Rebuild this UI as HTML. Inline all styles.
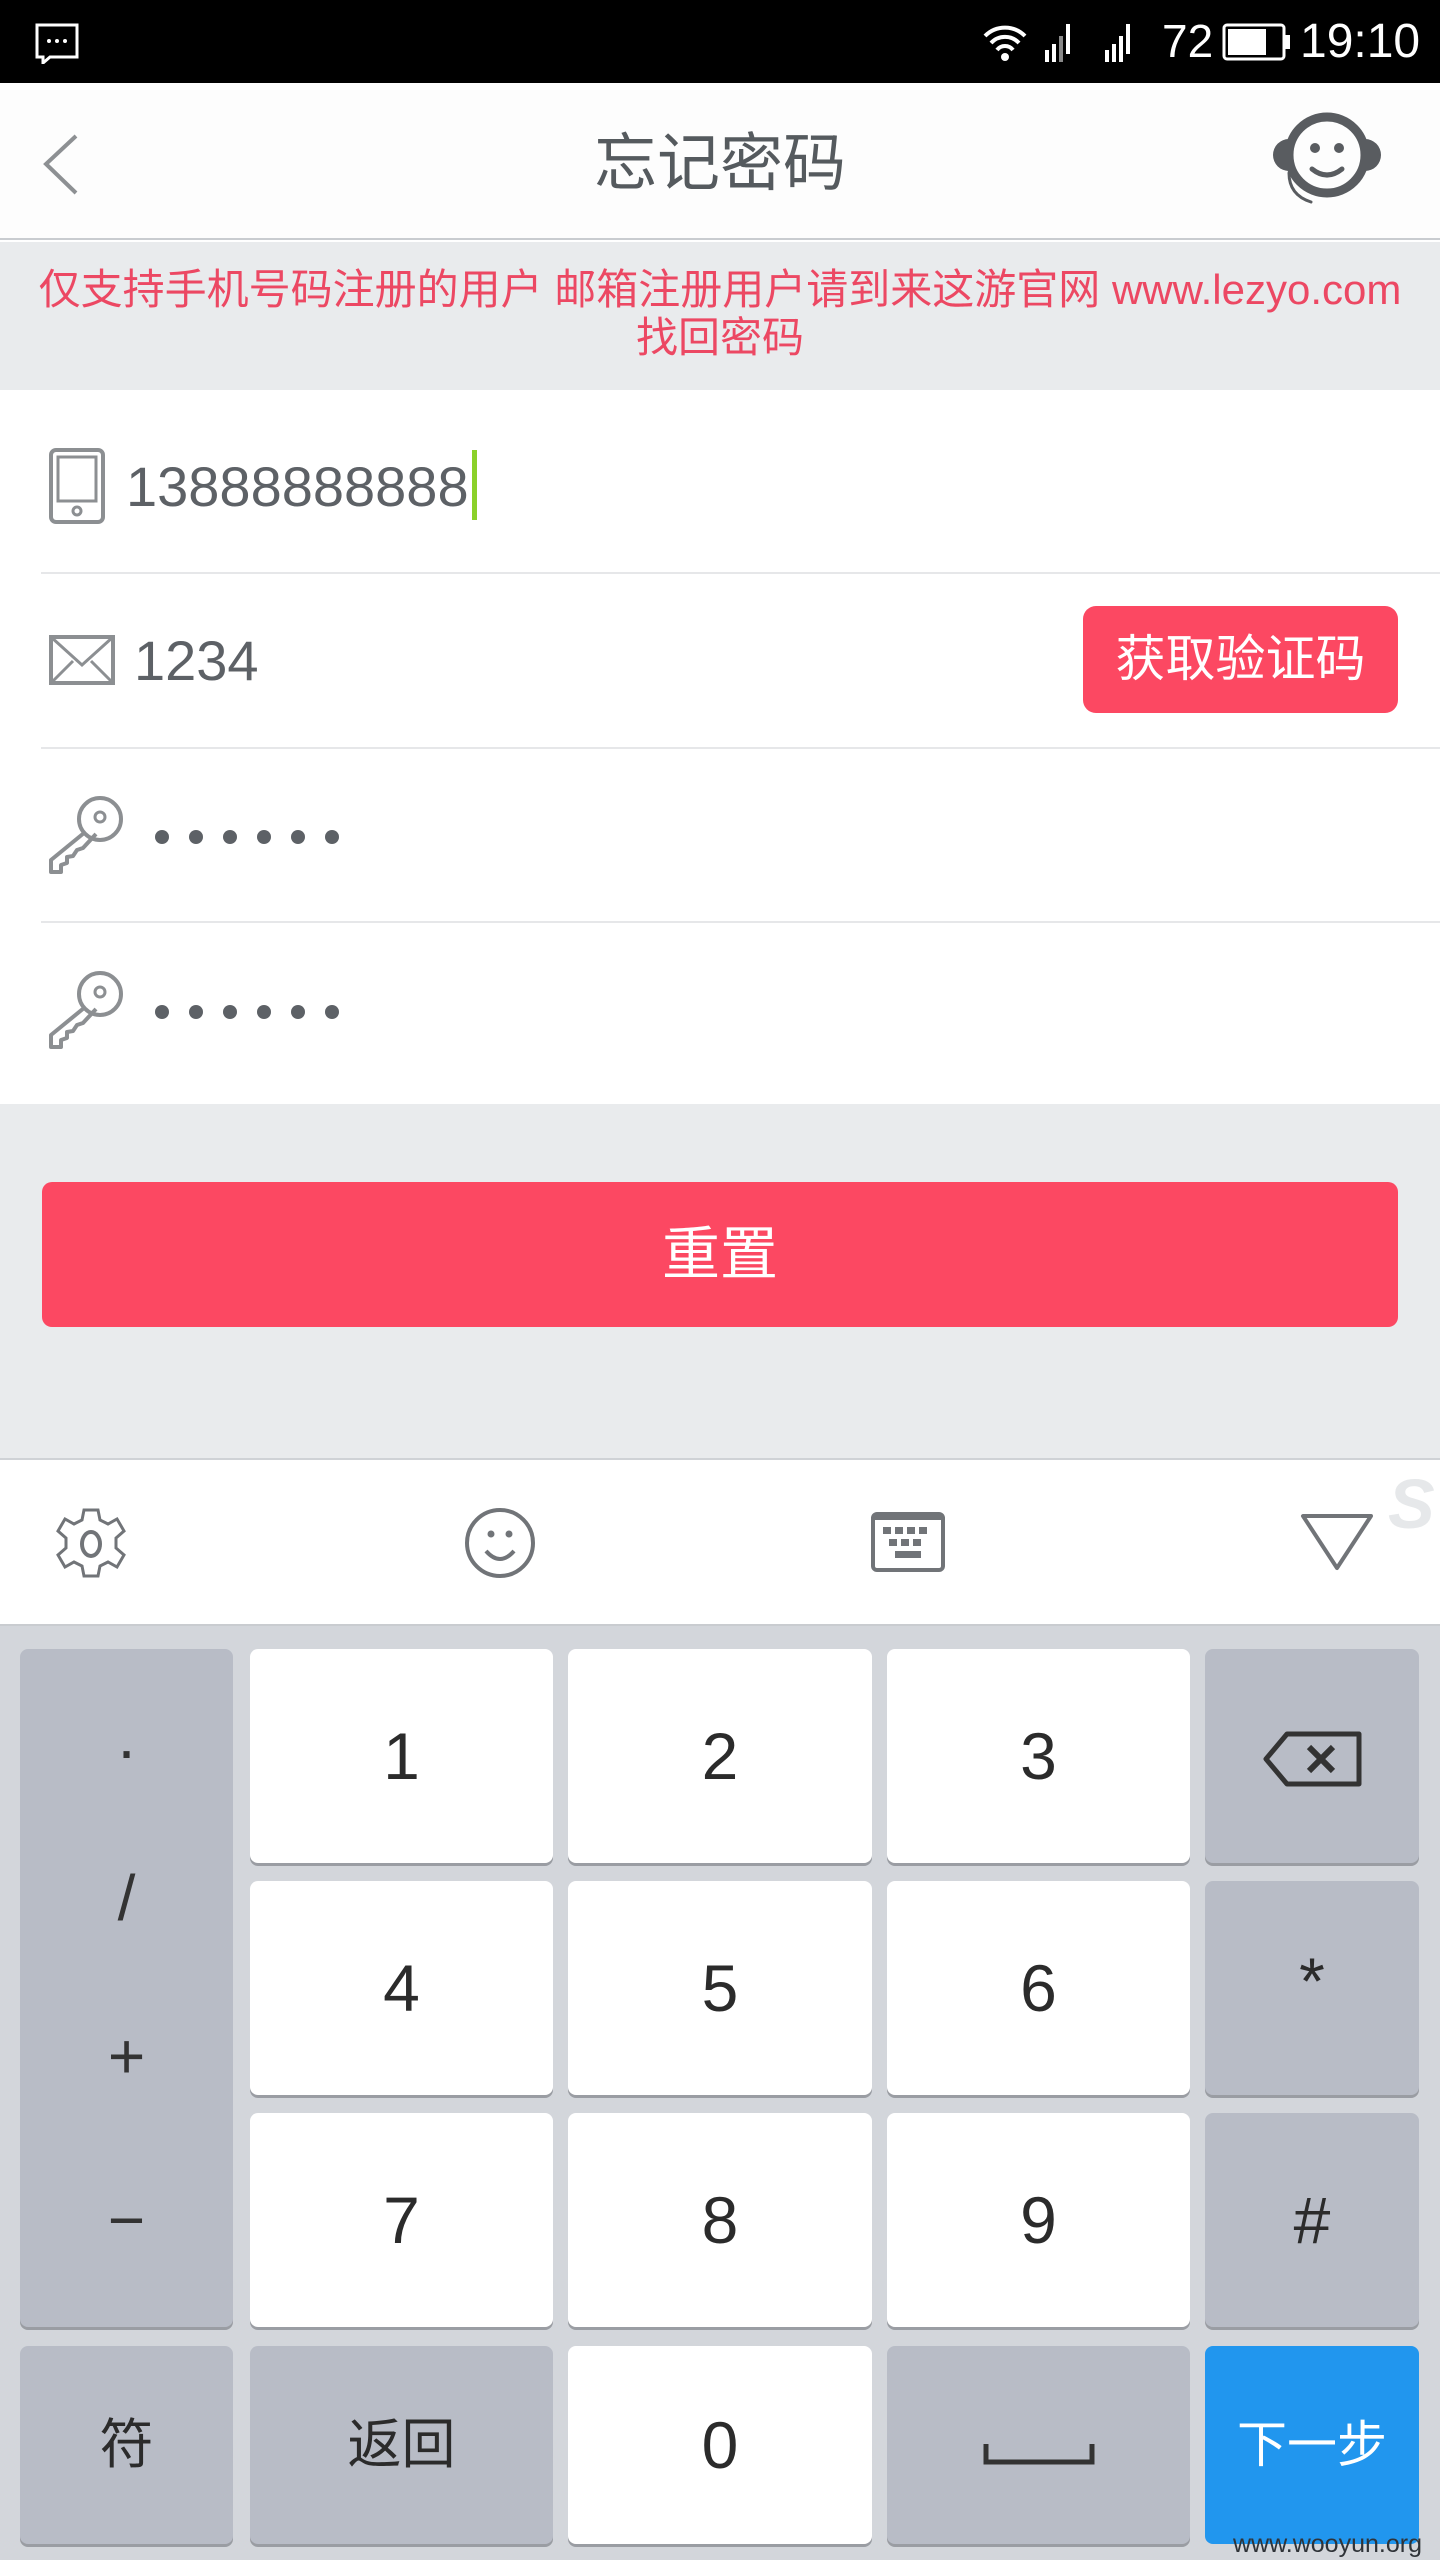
<!DOCTYPE html>
<html><head><meta charset="utf-8">
<style>
*{margin:0;padding:0;box-sizing:border-box}
body{width:1440px;height:2560px;overflow:hidden;background:#fff;font-family:"Liberation Sans","Noto Sans CJK SC",sans-serif;position:relative}
.abs{position:absolute}
.status{left:0;top:0;width:1440px;height:83px;background:#000;color:#fff}
.header{left:0;top:83px;width:1440px;height:157px;background:#fdfdfd;border-bottom:2px solid #c9ccd0}
.title{left:0;width:1440px;top:30px;text-align:center;font-size:63px;color:#555a5e}
.notice{left:0;top:242px;width:1440px;height:148px;background:#e9ebed;color:#ec4863;font-size:42px;text-align:center;line-height:48px;padding-top:24px;white-space:nowrap}
.form{left:0;top:390px;width:1440px;height:714px;background:#fff}
.sep{left:41px;width:1399px;height:2px;background:#e6e7e9}
.val{font-size:56px;color:#5d6166}
.getcode{left:1083px;top:606px;width:315px;height:107px;background:#fc4862;border-radius:13px;color:#fff;font-size:50px;text-align:center;line-height:107px}
.gray{left:0;top:1104px;width:1440px;height:354px;background:#e9ebed}
.reset{left:42px;top:1182px;width:1356px;height:145px;background:#fc4862;border-radius:10px;color:#fff;font-size:58px;text-align:center;line-height:145px}
.toolbar{left:0;top:1458px;width:1440px;height:168px;background:#fff;border-top:2px solid #cfd2d6;border-bottom:2px solid #c9ccd0}
.kb{left:0;top:1626px;width:1440px;height:934px;background:#d3d6db}
.key{position:absolute;border-radius:8px;text-align:center;color:#2b2b2b;box-shadow:0 3px 0 #9a9da3}
.w{background:#fff}.g{background:#b8bcc6}
.d{font-size:66px}
</style></head><body>
<div class="abs status">
  <svg class="abs" style="left:34px;top:22px" width="46" height="42" viewBox="0 0 46 42"><path d="M3 3h40v32H16l-7 6v-6H3z" fill="none" stroke="#fff" stroke-width="3"/><circle cx="15" cy="19" r="2" fill="#fff"/><circle cx="23" cy="19" r="2" fill="#fff"/><circle cx="31" cy="19" r="2" fill="#fff"/></svg>
  <svg class="abs" style="left:980px;top:20px" width="175" height="46" viewBox="0 0 175 46">
    <path d="M5 16a28 28 0 0 1 40 0M11 23a19 19 0 0 1 28 0M17 30a10 10 0 0 1 16 0" fill="none" stroke="#fff" stroke-width="4"/><circle cx="25" cy="37" r="4" fill="#fff"/>
    <rect x="65" y="30" width="4" height="12" fill="#fff"/><rect x="72" y="24" width="4" height="18" fill="#fff"/><rect x="79" y="16" width="4" height="26" fill="#888"/><rect x="86" y="4" width="4" height="30" fill="#fff"/>
    <rect x="125" y="30" width="4" height="12" fill="#fff"/><rect x="132" y="24" width="4" height="18" fill="#fff"/><rect x="139" y="16" width="4" height="26" fill="#fff"/><rect x="146" y="4" width="4" height="30" fill="#fff"/>
  </svg>
  <div class="abs" style="left:1162px;top:14px;font-size:46px;color:#fff">72</div>
  <svg class="abs" style="left:1222px;top:22px" width="70" height="40" viewBox="0 0 70 40"><rect x="2" y="3" width="60" height="34" rx="3" fill="none" stroke="#fff" stroke-width="3"/><rect x="6" y="7" width="38" height="26" fill="#fff"/><rect x="63" y="13" width="5" height="14" fill="#fff"/></svg>
  <div class="abs" style="left:1300px;top:14px;font-size:48px;color:#fff">19:10</div>
</div>
<div class="abs header">
  <svg class="abs" style="left:38px;top:50px" width="46" height="64" viewBox="0 0 46 64"><path d="M38 3L8 31l30 29" fill="none" stroke="#8d9093" stroke-width="4"/></svg>
  <div class="abs title">忘记密码</div>
  <svg class="abs" style="left:1265px;top:22px" width="120" height="110" viewBox="0 0 120 110">
    <circle cx="62" cy="50" r="38" fill="none" stroke="#595c60" stroke-width="9"/>
    <path d="M24 34a8 8 0 0 0 0 32h4V34zM100 34a8 8 0 0 1 0 32h-4V34z" fill="#595c60"/>
    <circle cx="50" cy="43" r="5" fill="#595c60"/><circle cx="74" cy="43" r="5" fill="#595c60"/>
    <path d="M47 64q15 12 30 0" fill="none" stroke="#595c60" stroke-width="5" stroke-linecap="round"/>
    <path d="M24 68q0 22 22 29" fill="none" stroke="#595c60" stroke-width="3" stroke-linecap="round"/>
  </svg>
</div>
<div class="abs notice">仅支持手机号码注册的用户 邮箱注册用户请到来这游官网 www.lezyo.com<br>找回密码</div>
<div class="abs form"></div>
<svg class="abs" style="left:48px;top:447px" width="58" height="78" viewBox="0 0 58 78"><rect x="3" y="3" width="52" height="72" rx="5" fill="none" stroke="#8c8f92" stroke-width="4"/><rect x="10" y="10" width="38" height="44" fill="none" stroke="#8c8f92" stroke-width="3"/><circle cx="29" cy="64" r="4" fill="none" stroke="#8c8f92" stroke-width="3"/></svg>
<div class="abs val" style="left:126px;top:454px">13888888888</div>
<div class="abs" style="left:472px;top:450px;width:5px;height:70px;background:#8bd12a"></div>
<div class="abs sep" style="top:572px"></div>
<svg class="abs" style="left:48px;top:634px" width="68" height="52" viewBox="0 0 68 52"><rect x="3" y="3" width="62" height="46" fill="none" stroke="#8c8f92" stroke-width="4"/><path d="M3 3l31 28 31-28M3 49l22-22M65 49L43 27" fill="none" stroke="#8c8f92" stroke-width="3"/></svg>
<div class="abs val" style="left:134px;top:628px">1234</div>
<div class="abs getcode">获取验证码</div>
<div class="abs sep" style="top:747px"></div>
<svg class="abs" style="left:46px;top:795px" width="300" height="80" viewBox="0 0 300 80">
  <circle cx="54" cy="24" r="21" fill="none" stroke="#8c8f92" stroke-width="4"/><circle cx="54" cy="22" r="5" fill="none" stroke="#8c8f92" stroke-width="3"/>
  <path d="M38 38L5 65v12h10v-7l6-2v-6l6-1 4-6 6-2 13-14" fill="none" stroke="#8c8f92" stroke-width="4" stroke-linejoin="round"/>
  <g fill="#5d6166"><circle cx="116" cy="42" r="7"/><circle cx="150" cy="42" r="7"/><circle cx="184" cy="42" r="7"/><circle cx="218" cy="42" r="7"/><circle cx="252" cy="42" r="7"/><circle cx="286" cy="42" r="7"/></g>
</svg>
<div class="abs sep" style="top:921px"></div>
<svg class="abs" style="left:46px;top:970px" width="300" height="80" viewBox="0 0 300 80">
  <circle cx="54" cy="24" r="21" fill="none" stroke="#8c8f92" stroke-width="4"/><circle cx="54" cy="22" r="5" fill="none" stroke="#8c8f92" stroke-width="3"/>
  <path d="M38 38L5 65v12h10v-7l6-2v-6l6-1 4-6 6-2 13-14" fill="none" stroke="#8c8f92" stroke-width="4" stroke-linejoin="round"/>
  <g fill="#5d6166"><circle cx="116" cy="42" r="7"/><circle cx="150" cy="42" r="7"/><circle cx="184" cy="42" r="7"/><circle cx="218" cy="42" r="7"/><circle cx="252" cy="42" r="7"/><circle cx="286" cy="42" r="7"/></g>
</svg>
<div class="abs gray"></div>
<div class="abs reset">重置</div>
<div class="abs toolbar">
  <svg class="abs" style="left:54px;top:46px" width="74" height="76" viewBox="0 0 74 76"><path d="M30 4h14l2 10 8 4 9-5 7 12-8 7v10l8 7-7 12-9-5-8 4-2 10H30l-2-10-8-4-9 5-7-12 8-7V32l-8-7 7-12 9 5 8-4z" fill="none" stroke="#717478" stroke-width="3"/><ellipse cx="37" cy="38" rx="9" ry="12" fill="none" stroke="#717478" stroke-width="4"/></svg>
  <svg class="abs" style="left:464px;top:46px" width="72" height="74" viewBox="0 0 72 74"><circle cx="36" cy="37" r="33" fill="none" stroke="#717478" stroke-width="4"/><circle cx="27" cy="28" r="3.5" fill="#717478"/><circle cx="45" cy="28" r="3.5" fill="#717478"/><path d="M22 45q14 16 28 0" fill="none" stroke="#717478" stroke-width="4"/></svg>
  <svg class="abs" style="left:870px;top:51px" width="76" height="62" viewBox="0 0 76 62"><rect x="3" y="3" width="70" height="56" rx="4" fill="none" stroke="#717478" stroke-width="4"/><rect x="3" y="3" width="70" height="6" fill="#717478"/><g fill="#717478"><rect x="13" y="16" width="8" height="7"/><rect x="25" y="16" width="8" height="7"/><rect x="37" y="16" width="8" height="7"/><rect x="49" y="16" width="8" height="7"/><rect x="19" y="28" width="8" height="7"/><rect x="31" y="28" width="8" height="7"/><rect x="43" y="28" width="8" height="7"/><rect x="25" y="40" width="26" height="7"/></g></svg>
  <svg class="abs" style="left:1300px;top:52px" width="74" height="60" viewBox="0 0 74 60"><path d="M3 4h68L37 56z" fill="none" stroke="#717478" stroke-width="4" stroke-linejoin="round"/></svg>
  <div class="abs" style="left:1388px;top:4px;font-size:70px;font-weight:bold;color:#e6e8ea;font-style:italic">S</div>
</div>
<div class="abs kb">
  <div class="key g" style="left:20px;top:23px;width:213px;height:678px;font-size:64px;color:#333">
    <div class="abs" style="left:0;width:213px;top:64px">·</div>
    <div class="abs" style="left:0;width:213px;top:212px">/</div>
    <div class="abs" style="left:0;width:213px;top:370px">+</div>
    <div class="abs" style="left:0;width:213px;top:534px">−</div>
  </div>
  <div class="key w d" style="left:250px;top:23px;width:303px;height:214px;line-height:214px">1</div>
  <div class="key w d" style="left:568px;top:23px;width:304px;height:214px;line-height:214px">2</div>
  <div class="key w d" style="left:887px;top:23px;width:303px;height:214px;line-height:214px">3</div>
  <div class="key g" style="left:1205px;top:23px;width:214px;height:214px">
    <svg class="abs" style="left:58px;top:82px" width="100" height="56" viewBox="0 0 100 56"><path d="M24 3h72v50H24L3 28z" fill="none" stroke="#333" stroke-width="5" stroke-linejoin="round"/><path d="M46 16l24 24M70 16L46 40" stroke="#333" stroke-width="6"/></svg>
  </div>
  <div class="key w d" style="left:250px;top:255px;width:303px;height:214px;line-height:214px">4</div>
  <div class="key w d" style="left:568px;top:255px;width:304px;height:214px;line-height:214px">5</div>
  <div class="key w d" style="left:887px;top:255px;width:303px;height:214px;line-height:214px">6</div>
  <div class="key g d" style="left:1205px;top:255px;width:214px;height:214px;line-height:200px">*</div>
  <div class="key w d" style="left:250px;top:487px;width:303px;height:214px;line-height:214px">7</div>
  <div class="key w d" style="left:568px;top:487px;width:304px;height:214px;line-height:214px">8</div>
  <div class="key w d" style="left:887px;top:487px;width:303px;height:214px;line-height:214px">9</div>
  <div class="key g d" style="left:1205px;top:487px;width:214px;height:214px;line-height:214px">#</div>
  <div class="key g" style="left:20px;top:720px;width:213px;height:198px;line-height:198px;font-size:54px">符</div>
  <div class="key g" style="left:250px;top:720px;width:303px;height:198px;line-height:198px;font-size:54px">返回</div>
  <div class="key w d" style="left:568px;top:720px;width:304px;height:198px;line-height:198px">0</div>
  <div class="key g" style="left:887px;top:720px;width:303px;height:198px">
    <svg class="abs" style="left:96px;top:96px" width="112" height="24" viewBox="0 0 112 24"><path d="M3 2v18h106V2" fill="none" stroke="#333" stroke-width="5"/></svg>
  </div>
  <div class="key" style="left:1205px;top:720px;width:214px;height:198px;line-height:198px;font-size:50px;background:#2196ee;color:#fff;box-shadow:none">下一步</div>
  <div class="abs" style="left:1233px;top:904px;font-size:25px;color:#2f3338">www.wooyun.org</div>
</div>
</body></html>
